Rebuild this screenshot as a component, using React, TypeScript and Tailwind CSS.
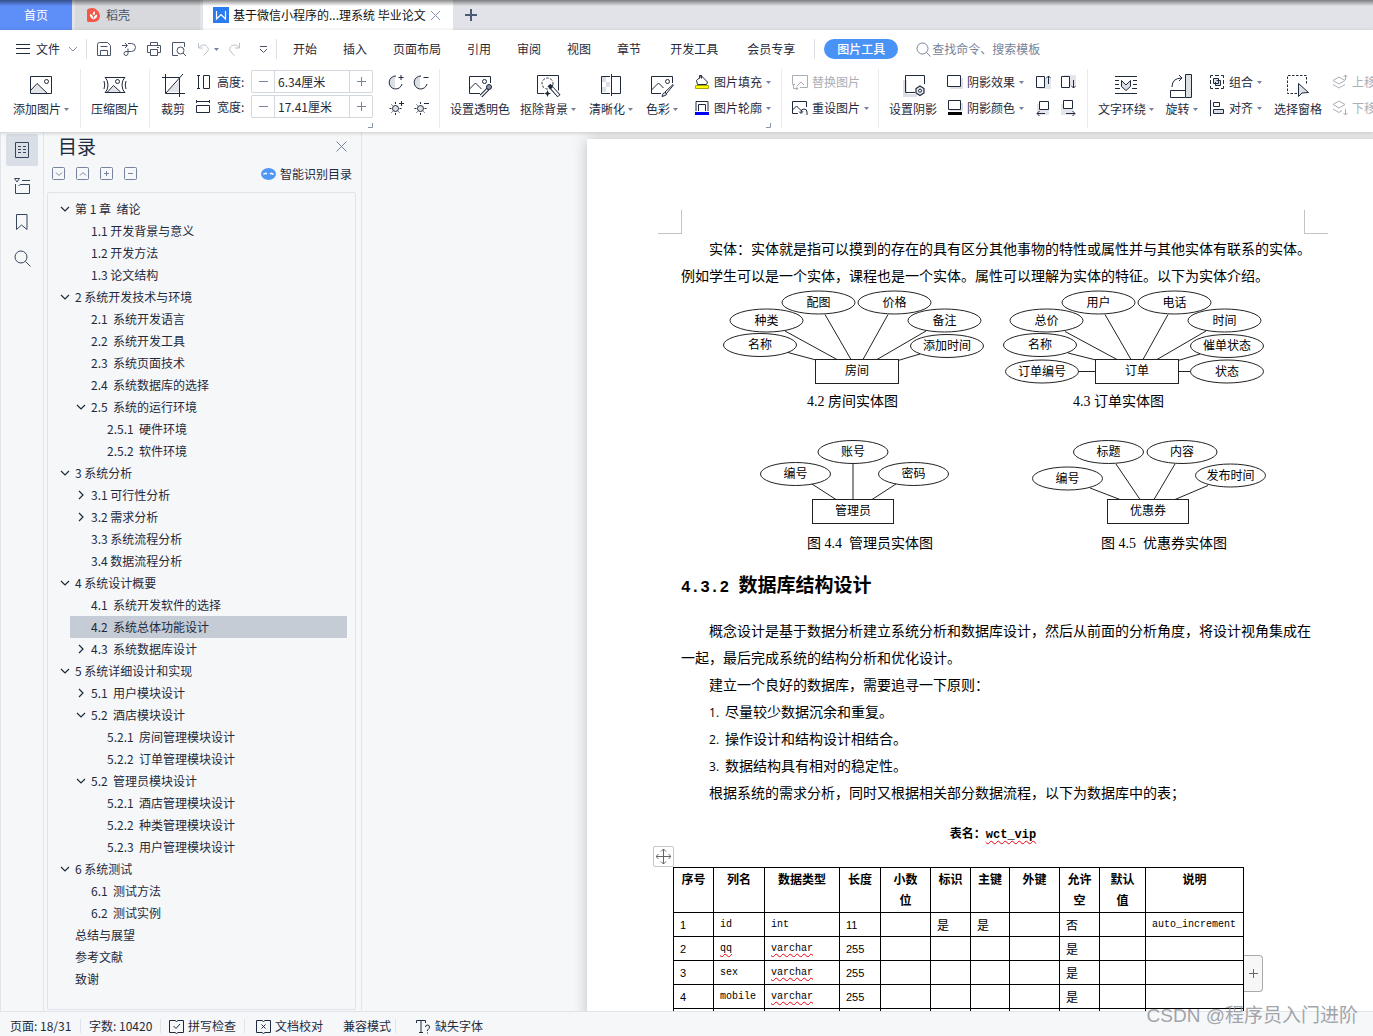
import type { ReactNode } from 'react'

const UI = "font-['Noto_Sans_CJK_SC',sans-serif]"

type SvgProps = { w?: number; h?: number; className?: string; children: ReactNode }

const Svg = ({ w = 16, h = 16, className = '', children }: SvgProps) => (
	<svg
		width={w}
		height={h}
		viewBox={`0 0 ${w} ${h}`}
		fill="none"
		stroke="currentColor"
		aria-hidden="true"
		className={`shrink-0 ${className}`}
	>
		{children}
	</svg>
)

const Caret = () => (
	<svg width="5" height="3" viewBox="0 0 5 3" className="shrink-0" aria-hidden="true">
		<path d="M0 0h5L2.5 3z" fill="#76839b" />
	</svg>
)

const Sep = () => <span className="w-px shrink-0 self-stretch bg-[#e9ebef]" />

/* ---------- title tabs ---------- */

const TitleTabs = () => (
	<div className="relative flex h-[30px] shrink-0 bg-[#e1e3e8] text-xs">
		<button className="w-[72px] bg-[#5e8ef8] text-white">首页</button>
		<button className="ml-[3px] flex w-[125px] items-center gap-1.5 bg-[#d8d9dd] pl-3 text-[#4a5262]">
			<Svg w={13} h={14}>
				<path
					d="M0 2.5Q0 1 2 .6Q7-1 10.500 2.500Q13 5 13 8Q12.500 14 6 14H1.500Q0 14 0 12.500z"
					fill="#f4564a"
					stroke="none"
				/>
				<path d="M6.500 11.500C3.500 10 2.500 8 3 6C5 6.500 6.500 8.500 6.500 11.500zM6.500 11.500C10 10 10.500 8 10 6.500C8 7 6.500 8.500 6.500 11.500zM5.500 6.500Q5.500 4 7.500 3Q8.500 5 7.500 7" fill="#fff" stroke="none" />
			</Svg>
			稻壳
		</button>
		<div className="ml-[3px] flex w-[250px] items-center bg-white pl-2.5 text-[#111]">
			<Svg>
				<path d="M0 0h16v16H0z" fill="#2a7bf0" stroke="none" />
				<path d="M3.500 4v8L8 7.500l4.500 4.500V4" stroke="#fff" strokeWidth="1.200" />
			</Svg>
			<span className="ml-1 whitespace-nowrap">基于微信小程序的...理系统 毕业论文</span>
			<button aria-label="关闭标签" className="ml-1 text-[#8794b0]">
				<Svg w={11} h={11}>
					<path d="M1 1l9 9M10 1l-9 9" />
				</Svg>
			</button>
		</div>
		<button aria-label="新建标签" className="ml-3 text-[#4c5a73]">
			<Svg w={12} h={12}>
				<path d="M6 0v12M0 6h12" strokeWidth="2" />
			</Svg>
		</button>
		<div className="pointer-events-none absolute inset-x-0 top-0 h-1.5 bg-linear-to-b from-black/45 to-transparent" />
	</div>
)

/* ---------- menu row ---------- */

const QuickAccess = () => (
	<div className="flex items-center gap-[9px] text-[#4b5568]">
		<button aria-label="保存">
			<Svg>
				<path d="M3.500 1.500h8l3 3v10h-13v-11q0-2 2-2zM4.500 5.500h7M4.500 14.500v-5h7v5" />
			</Svg>
		</button>
		<button aria-label="输出为PDF">
			<Svg>
				<path d="M1 4.500h5M4 2l2.500 2.500L4 7M7 2.500h3.500a4 4 0 010 8H5M5 10.500a2 2 0 102 2V7.500" />
			</Svg>
		</button>
		<button aria-label="打印">
			<Svg>
				<path d="M4.500 4.500v-3h7v3M4 11.500H1.500v-7h13v7H12M4.500 8.500h7v6h-7zM11 6.500h2" />
			</Svg>
		</button>
		<button aria-label="打印预览">
			<Svg>
				<path d="M7 14.500H1.500v-13h12V6M12 12l3 3" />
				<circle cx="9.500" cy="9.500" r="3.500" />
			</Svg>
		</button>
		<button aria-label="撤销" className="flex items-center gap-1 text-[#bcc2cc]">
			<Svg w={14}>
				<path d="M2.500 2v5H7M2.500 7Q6 2.500 10 4.500Q14 7.500 11 11L7.500 14.500" />
			</Svg>
			<Caret />
		</button>
		<button aria-label="恢复" className="text-[#bcc2cc]">
			<Svg w={14}>
				<path d="M11.500 2v5H7M11.500 7Q8 2.500 4 4.500Q0 7.500 3 11L6.500 14.500" />
			</Svg>
		</button>
		<button aria-label="自定义快速访问" className="ml-2">
			<Svg w={9} h={9}>
				<path d="M1 1.500h7M1 4l3.500 3.500L8 4" />
			</Svg>
		</button>
	</div>
)

const menuTabs = ['开始', '插入', '页面布局', '引用', '审阅', '视图', '章节', '开发工具', '会员专享']

const MenuRow = () => (
	<div className="flex h-[38px] shrink-0 items-center pl-4 whitespace-nowrap">
		<button className="flex items-center gap-1.5">
			<Svg w={14} h={12}>
				<path d="M0 1.500h14M0 5.500h14M0 10.500h14" />
			</Svg>
			文件
			<Svg w={10} h={6} className="ml-0.5 text-[#8a94a8]">
				<path d="M1 1l4 4l4-4" />
			</Svg>
		</button>
		<span className="mr-[9px] ml-2 h-5 w-px bg-[#dde0e6]" />
		<QuickAccess />
		<span className="ml-2 h-5 w-px bg-[#dde0e6]" />
		<nav className="ml-4 flex gap-[26px]">
			{menuTabs.map(tab => (
				<button key={tab} className="nth-[n+8]:ml-[3px]">
					{tab}
				</button>
			))}
		</nav>
		<span className="ml-[19px] h-5 w-px bg-[#dde0e6]" />
		<button className="ml-[9px] h-5 w-[74px] rounded-full bg-[#4893f5] font-medium text-white">
			图片工具
		</button>
		<label className="ml-[18px] flex items-center text-[#76839b]">
			<Svg w={15} h={15}>
				<circle cx="6.500" cy="6.500" r="5.500" />
				<path d="M10.500 10.500l4 4" />
			</Svg>
			<input
				type="text"
				aria-label="查找命令"
				placeholder="查找命令、搜索模板"
				className="ml-px w-40 outline-none placeholder:text-[#76839b]"
			/>
		</label>
	</div>
)

/* ---------- ribbon ---------- */

type BigProps = { label: string; caret?: boolean; className?: string; children: ReactNode }

const Big = ({ label, caret, className = '', children }: BigProps) => (
	<button className={`flex shrink-0 flex-col items-center gap-px pt-[3px] ${className}`}>
		<Svg w={26} h={27}>{children}</Svg>
		<span className="flex items-center gap-[3px] leading-[18px]">
			{label}
			{caret && <Caret />}
		</span>
	</button>
)

const Small = ({ label, caret, className = '', children }: BigProps) => (
	<button className={`flex h-[26px] items-center gap-1 ${className}`}>
		<Svg>{children}</Svg>
		<span>{label}</span>
		{caret && <Caret />}
	</button>
)

const Stepper = ({ id, label, value, children }: { id: string; label: string; value: string; children: ReactNode }) => (
	<div className="flex h-[25px] items-center">
		<Svg w={14}>{children}</Svg>
		<label htmlFor={id} className="ml-[7px] w-[34px]">
			{label}
		</label>
		<div className="flex h-[23px] w-[122px] rounded-xs border border-[#d3d7de]">
			<button aria-label={`${label} 减`} className="flex w-[22px] items-center justify-center text-[#76839b]">
				<Svg w={9} h={9}>
					<path d="M0 4.500h9" />
				</Svg>
			</button>
			<input
				id={id}
				defaultValue={value}
				className="w-0 flex-1 border-x border-[#d3d7de] pl-[3px] outline-none"
			/>
			<button aria-label={`${label} 加`} className="flex w-[22px] items-center justify-center text-[#76839b]">
				<Svg w={9} h={9}>
					<path d="M0 4.500h9M4.500 0v9" />
				</Svg>
			</button>
		</div>
	</div>
)

const Mini = ({ label, children }: { label: string; children: ReactNode }) => (
	<button aria-label={label}>
		<Svg>{children}</Svg>
	</button>
)

const Corner = () => (
	<Svg w={5} h={5} className="absolute right-0 bottom-0 text-[#8a94a8]">
		<path d="M4.500 0v4.500H0" />
	</Svg>
)

const sunRays = 'M7.500 2v2M7.500 13v2M1.500 8.500h2M11.500 8.500h2M3.500 4.500l1 1M3.500 12.500l1-1M11.500 12.500l-1-1'

const Ribbon = () => (
	<div className="flex h-16 shrink-0 gap-[10px] pt-px pb-1 pl-3 whitespace-nowrap">
		<Big label="添加图片" caret className="w-[58px]">
			<path d="M3 18l6-6.500l10 9.500H3z" fill="#e3e5ea" stroke="none" />
			<path d="M2.500 4.500h21v17h-21zM3 18l6-6.500l10 9.500" />
			<circle cx="18.500" cy="9.500" r="2" />
		</Big>
		<Sep />
		<Big label="压缩图片">
			<path d="M6 20l6-6l6 6z" fill="#e3e5ea" stroke="none" />
			<path d="M3 5.500h20M3 20.500h20M5.500 20l6-6.500l7 6.500M3 5q3 3.500 3 8t-3 8M2 9q1.500 4 0 8M23 5q-3 3.500-3 8t3 8M24 9q-1.500 4 0 8" />
			<circle cx="15.500" cy="9.500" r="2" />
		</Big>
		<Sep />
		<Big label="裁剪">
			<path d="M7 20L20 7v13z" fill="#e3e5ea" stroke="none" />
			<path d="M5.500 2v19.500H25M2 5.500h17.500V25M23 2L6 21" />
		</Big>
		<div className="relative w-[177px] shrink-0">
			<Stepper id="pic-height" label="高度:" value="6.34厘米">
				<path d="M2.500 1.500v13M1 1.500h3M1 14.500h3M7.500 1.500h6v13h-6z" />
			</Stepper>
			<Stepper id="pic-width" label="宽度:" value="17.41厘米">
				<path d="M.5 2.500h13M.5 1v3M13.500 1v3M.5 6.500h13v7H.5z" />
			</Stepper>
			<Corner />
		</div>
		<div className="grid w-[46px] shrink-0 grid-cols-[16px_16px] content-start gap-x-[9px] gap-y-[10px] pt-[5px] pl-[5px]">
			<Mini label="增加对比度">
				<path d="M7 2.500a6 6 0 000 12z" fill="#dcdfe5" stroke="none" />
				<path d="M8 2a6.500 6.500 0 106 8M13 1v5M10.500 3.500h5" />
			</Mini>
			<Mini label="降低对比度">
				<path d="M7 2.500a6 6 0 000 12z" fill="#dcdfe5" stroke="none" />
				<path d="M8 2a6.500 6.500 0 106 8M10.500 3.500h5" />
			</Mini>
			<Mini label="增加亮度">
				<circle cx="7.500" cy="8.500" r="3" fill="#dcdfe5" />
				<path d={sunRays} />
				<path d="M13.500 1v5M11 3.500h5" />
			</Mini>
			<Mini label="降低亮度">
				<circle cx="7.500" cy="8.500" r="3" fill="#dcdfe5" />
				<path d={sunRays} />
				<path d="M11 3.500h5" />
			</Mini>
		</div>
		<Sep />
		<Big label="设置透明色">
			<path d="M13 21.500H2.500v-17h21V11M2.500 17l6-6l6 6" />
			<circle cx="17.500" cy="9.500" r="2" />
			<path d="M14 24l7-7" strokeWidth="3.500" />
			<path d="M14 24l6.500-6.500" stroke="#fff" strokeWidth="1.500" />
			<circle cx="22" cy="15" r="2.500" fill="#8a94a8" />
		</Big>
		<Big label="抠除背景" caret>
			<path d="M9 21.500H2.500v-18h21v15" />
			<circle cx="12.500" cy="11.500" r="5.500" strokeDasharray="2.500 1.500" />
			<path d="M14 13l10 11" strokeWidth="4" />
			<path d="M17 16l6.500 7.500" stroke="#fff" strokeWidth="2" />
			<path d="M12.500 18l1 2.500l2.500 1l-2.500 1l-1 2.500l-1-2.500l-2.500-1l2.500-1z" fill="currentColor" stroke="none" />
		</Big>
		<Big label="清晰化" caret className="w-[50px]">
			<path d="M4 5h4v5H4zM8 10h4v5H8zM4 15h4v5H4z" fill="#dcdfe5" stroke="none" />
			<path d="M12 4.500H3.500v17H12M14 4.500h8.500v17H14M13.500 2v22" />
		</Big>
		<Big label="色彩" caret>
			<path d="M12 21.500H2.500v-17h21V11M2.500 18l7-7l5 5" />
			<circle cx="18.500" cy="9.500" r="2" />
			<path d="M16 20l8-7.500l.5.5l-7 8.500z" fill="#fff" />
			<path d="M13 24.500q1-5 4-3.500t-4 3.500z" fill="#dcdfe5" />
		</Big>
		<div className="relative flex w-[83px] shrink-0 flex-col pl-1.5">
			<Small label="图片填充" caret>
				<path d="M2.500 6.500l5-4.500l6 6l-1 2.500h-9zM5.500 4.500V1.500h2v3" />
				<path d="M1.500 11.500h13v3h-13z" fill="#ffff00" stroke="#a8a800" />
			</Small>
			<Small label="图片轮廓" caret>
				<path d="M2 11V1.500h12V11M4.500 11V4.500h7V11" />
				<path d="M1 12h14v3H1z" fill="#0000ff" stroke="none" />
			</Small>
			<Corner />
		</div>
		<Sep />
		<div className="flex w-[76px] shrink-0 flex-col">
			<Small label="替换图片" className="text-[#aaaeb7]">
				<path d="M3 10.500H.5v-9h15v12H8M5 12l4-4l3 3M1.500 10v4.500H6M4 12.500l2 2l-2 1.500" />
			</Small>
			<Small label="重设图片" caret>
				<path d="M6 13.500H.5v-12h14V7M.5 10l4-4l6 6M15 15v-3a3 3 0 00-6 0v1M7 11.500l2 2l2-2" />
			</Small>
		</div>
		<Sep />
		<Big label="设置阴影">
			<path d="M3 8h4v14h10v3H3z" fill="#dcdfe5" stroke="none" />
			<path d="M15 20.500H5.500v-17h19V12" />
			<path d="M20 14l4 2.500v4.500l-4 2.500l-4-2.500v-4.500z" fill="#e3e5ea" strokeWidth="1.200" />
			<circle cx="20" cy="18.700" r="1.500" fill="#fff" />
		</Big>
		<div className="flex w-[78px] shrink-0 flex-col">
			<Small label="阴影效果" caret>
				<path d="M3 4h13v11H3z" fill="#dcdfe5" stroke="none" />
				<path d="M.5 1.500h13v11H.5z" fill="#fff" />
			</Small>
			<Small label="阴影颜色" caret>
				<path d="M3 3h13v8H3z" fill="#dcdfe5" stroke="none" />
				<path d="M1.500.5h12v9h-12z" fill="#fff" />
				<path d="M1 12h14v3H1z" fill="#000" stroke="none" />
			</Small>
		</div>
		<div className="grid w-[42px] shrink-0 grid-cols-[16px_16px] content-start gap-x-[9px] gap-y-[10px] pt-[5px]">
			<Mini label="上移阴影">
				<path d="M4 5h12v10H4z" fill="#e3e5ea" stroke="none" />
				<path d="M1.500 2.500h8v11h-8z" fill="#fff" />
				<path d="M13.500 10V2M11 4.500L13.500 2L16 4.500" />
			</Mini>
			<Mini label="下移阴影">
				<path d="M4 1h12v10H4z" fill="#e3e5ea" stroke="none" />
				<path d="M1.500 2.500h8v11h-8z" fill="#fff" />
				<path d="M13.500 6v8M11 11.500l2.500 2.500l2.500-2.500" />
			</Mini>
			<Mini label="左移阴影">
				<path d="M2 4h12v11H2z" fill="#e3e5ea" stroke="none" />
				<path d="M4.500 1.500h9v8h-9z" fill="#fff" />
				<path d="M10 13.500H2M4.500 11L2 13.500L4.500 16" />
			</Mini>
			<Mini label="右移阴影">
				<path d="M1 4h12v11H1z" fill="#e3e5ea" stroke="none" />
				<path d="M3.500.5h9v8h-9z" fill="#fff" />
				<path d="M6 13.500h9M12.500 11l2.500 2.500l-2.500 2.500" />
			</Mini>
		</div>
		<Sep />
		<Big label="文字环绕" caret>
			<path d="M2 4.500h22M2 8.500h4M20 8.500h4M2 12.500h4M20 12.500h4M2 16.500h5M19 16.500h5M2 21.500h22" />
			<path d="M8.500 8.500l4.500 4.500l4.500-4.500v6l-4.500 4l-4.500-4z" fill="#dcdfe5" />
		</Big>
		<Big label="旋转" caret className="w-[35px]">
			<path d="M16.500 2.500h6v23h-6z" fill="#dcdfe5" />
			<path d="M16 25.500H1.500v-7H16M3 15q0-9 10-9M10 3l3 3l-3 3" />
		</Big>
		<div className="flex w-[55px] shrink-0 flex-col">
			<Small label="组合" caret>
				<path d="M1.500 4V1.500H4M12 1.500h2.500V4M14.500 12v2.500H12M4 14.500H1.500V12M6 1.500h4M6 14.500h4M1.500 6v4M14.500 6v4" />
				<path d="M4.500 4.500h5v5h-5zM7.500 6.500h4v5h-5V8" fill="#dcdfe5" />
			</Small>
			<Small label="对齐" caret>
				<path d="M1.500 0v16M4.500 2.500h6v4h-6z" />
				<path d="M4.500 9.500h10v4h-10z" fill="#dcdfe5" />
			</Small>
		</div>
		<Big label="选择窗格">
			<path d="M12 21.500H2.500v-18h19V13" strokeDasharray="2.500 1.500" />
			<path d="M13.500 11.500v13l3.500-3.500l6.500-.5z" fill="#dcdfe5" />
		</Big>
		<div className="flex shrink-0 flex-col text-[#aaaeb7]">
			<Small label="上移">
				<path d="M7 3l6 3.500l-6 3.500l-6-3.500zM1 10.500l6 3.500l6-3.500M13.500 6V1M11.500 3l2-2l2 2" />
			</Small>
			<Small label="下移">
				<path d="M7 1l6 3.500l-6 3.500l-6-3.500zM1 9l6 3.500l3-2M13.500 9v6M11.500 13l2 2l2-2" />
			</Small>
		</div>
	</div>
)

/* ---------- side bar ---------- */

const Rail = () => (
	<div className="flex w-11 shrink-0 flex-col items-center gap-1 border-x border-[#e2e5eb] pt-0.5 text-[#37455c]">
		<button aria-label="目录" className="flex size-8 items-center justify-center rounded-xs bg-[#dadee6]">
			<Svg>
				<path d="M1.500.5h13v15h-13zM4 4.500h3M9 4.500h3M4 7.500h3M9 7.500h3M4 10.500h3M9 10.500h3" />
			</Svg>
		</button>
		<button aria-label="章节" className="flex size-8 items-center justify-center">
			<Svg>
				<path d="M.5.500h5L3 4zM8 2.500h8M1.500 6v9.500h14v-9H6L4.500 8" />
			</Svg>
		</button>
		<button aria-label="书签" className="flex size-8 items-center justify-center">
			<Svg>
				<path d="M2.500.500h10.500v15l-5.500-4.500l-5 4.500z" />
			</Svg>
		</button>
		<button aria-label="查找" className="flex size-8 items-center justify-center">
			<Svg w={17} h={17}>
				<circle cx="7" cy="7" r="6" />
				<path d="M11.500 11.500l5 5" />
			</Svg>
		</button>
	</div>
)

type Node = { text: string; level: 1 | 2 | 3; arrow?: 'open' | 'closed'; active?: boolean }

const outline: Node[] = [
	{ text: '第 1 章  绪论', level: 1, arrow: 'open' },
	{ text: '1.1 开发背景与意义', level: 2 },
	{ text: '1.2 开发方法', level: 2 },
	{ text: '1.3 论文结构', level: 2 },
	{ text: '2 系统开发技术与环境', level: 1, arrow: 'open' },
	{ text: '2.1  系统开发语言', level: 2 },
	{ text: '2.2  系统开发工具', level: 2 },
	{ text: '2.3  系统页面技术', level: 2 },
	{ text: '2.4  系统数据库的选择', level: 2 },
	{ text: '2.5  系统的运行环境', level: 2, arrow: 'open' },
	{ text: '2.5.1  硬件环境', level: 3 },
	{ text: '2.5.2  软件环境', level: 3 },
	{ text: '3 系统分析', level: 1, arrow: 'open' },
	{ text: '3.1 可行性分析', level: 2, arrow: 'closed' },
	{ text: '3.2 需求分析', level: 2, arrow: 'closed' },
	{ text: '3.3 系统流程分析', level: 2 },
	{ text: '3.4 数据流程分析', level: 2 },
	{ text: '4 系统设计概要', level: 1, arrow: 'open' },
	{ text: '4.1  系统开发软件的选择', level: 2 },
	{ text: '4.2  系统总体功能设计', level: 2, active: true },
	{ text: '4.3  系统数据库设计', level: 2, arrow: 'closed' },
	{ text: '5 系统详细设计和实现', level: 1, arrow: 'open' },
	{ text: '5.1  用户模块设计', level: 2, arrow: 'closed' },
	{ text: '5.2  酒店模块设计', level: 2, arrow: 'open' },
	{ text: '5.2.1  房间管理模块设计', level: 3 },
	{ text: '5.2.2  订单管理模块设计', level: 3 },
	{ text: '5.2  管理员模块设计', level: 2, arrow: 'open' },
	{ text: '5.2.1  酒店管理模块设计', level: 3 },
	{ text: '5.2.2  种类管理模块设计', level: 3 },
	{ text: '5.2.3  用户管理模块设计', level: 3 },
	{ text: '6 系统测试', level: 1, arrow: 'open' },
	{ text: '6.1  测试方法', level: 2 },
	{ text: '6.2  测试实例', level: 2 },
	{ text: '总结与展望', level: 1 },
	{ text: '参考文献', level: 1 },
	{ text: '致谢', level: 1 },
]

const indent = { 1: 'pl-[9px]', 2: 'ml-[22px] pl-[3px]', 3: 'ml-[38px] pl-[3px]' }

const toolIcons = [
	{ label: '展开', d: 'M4 5.500L7 8.500L10 5.500' },
	{ label: '收起', d: 'M4 8.500L7 5.500L10 8.500' },
	{ label: '增加', d: 'M4 6.500h5M6.500 4v5' },
	{ label: '减少', d: 'M4 6.500h5' },
]

const OutlinePane = () => (
	<aside className="flex w-[318px] shrink-0 flex-col border-r border-[#e2e5eb] pr-[5px] pl-[3px]">
		<div className="flex h-7 items-center justify-between pr-[9px] pl-[11px]">
			<h2 className="text-[19px] leading-7 text-[#1f2a3c]">目录</h2>
			<button aria-label="关闭" className="text-[#76839b]">
				<Svg w={11} h={11}>
					<path d="M.5.500l10 10M10.500.500l-10 10" />
				</Svg>
			</button>
		</div>
		<div className="flex h-8 items-center pb-2 pl-[5px] text-[#76839b]">
			<div className="flex gap-[10px] pt-1">
				{toolIcons.map(({ label, d }) => (
					<button key={label} aria-label={label}>
						<Svg w={14} h={14}>
							<rect x=".5" y=".5" width="12" height="12" rx="1" />
							<path d={d} />
						</Svg>
					</button>
				))}
			</div>
			<button className="mr-1 ml-auto flex items-center gap-1 pt-1 text-[#1f2a3c]">
				<Svg w={15} h={14}>
					<ellipse cx="7.500" cy="7" rx="7.500" ry="6" fill="#4f97f5" stroke="none" />
					<path d="M2.500 7.500q1.500-2 3.500-.5M9 7q2-1.500 3.500.5" stroke="#fff" strokeWidth="1.500" />
				</Svg>
				智能识别目录
			</button>
		</div>
		<ul className="mb-px flex-1 overflow-hidden rounded-xs border border-[#dfe3ea] pt-[5px]">
			{outline.map((node, i) => (
				<li
					key={i}
					className={`mr-2 flex h-[22px] items-center ${indent[node.level]} ${node.active ? 'bg-[#c5ccd6]' : ''}`}
				>
					<span className="mr-0.5 flex w-4 justify-center">
						{node.arrow === 'open' && (
							<Svg w={10} h={6}>
								<path d="M1 1l4 4l4-4" strokeWidth="1.200" />
							</Svg>
						)}
						{node.arrow === 'closed' && (
							<Svg w={6} h={10}>
								<path d="M1 1l4 4l-4 4" strokeWidth="1.200" />
							</Svg>
						)}
					</span>
					<a href="#" className="whitespace-pre">
						{node.text}
					</a>
				</li>
			))}
		</ul>
	</aside>
)

/* ---------- document ---------- */

type Attr = [text: string, cx: number, cy: number]
type Diagram = {
	caption: ReactNode
	captionClass: string
	view: [number, number, number, number]
	rx: number
	box: [text: string, x: number, y: number, w: number]
	attrs: Attr[]
	lines: string
}

const roomDiagram: Diagram = {
	caption: '4.2 房间实体图',
	captionClass: 'pl-[84px]',
	view: [723, 290, 261, 98],
	rx: 36.5,
	box: ['房间', 815.5, 359.5, 83],
	attrs: [
		['名称', 760, 345],
		['种类', 766.5, 320.5],
		['配图', 818.5, 302.5],
		['价格', 894.5, 302.5],
		['备注', 944.5, 320.5],
		['添加时间', 947, 346],
	],
	lines: 'M788 352.5L816 360M785 331L837 359.5M825 314.5L851 359.5M888 314.5L863 359.5M926 331L877 359.5M920 354L898 360.5',
}

const orderDiagram: Diagram = {
	caption: '4.3 订单实体图',
	captionClass: 'pl-[70px]',
	view: [1003, 290, 261, 98],
	rx: 36.5,
	box: ['订单', 1095.5, 359.5, 83],
	attrs: [
		['名称', 1040, 345],
		['总价', 1046.5, 320.5],
		['用户', 1098.5, 302.5],
		['电话', 1174.5, 302.5],
		['时间', 1224.5, 320.5],
		['催单状态', 1227, 346],
		['订单编号', 1042, 371.5],
		['状态', 1227, 371.5],
	],
	lines: 'M1068 353L1096 360M1065 331.5L1117 359.5M1105 314.5L1131 359.5M1168 314.5L1143 359.5M1206 331L1157 359.5M1200 354L1178 360.5M1078.5 371.5H1095.5M1179 371.5H1190.5',
}

const adminDiagram: Diagram = {
	caption: '图 4.4  管理员实体图',
	captionClass: 'pl-[47px]',
	view: [760, 440, 189, 90],
	rx: 35,
	box: ['管理员', 812.5, 499.5, 81],
	attrs: [
		['账号', 853, 452],
		['编号', 795.5, 474],
		['密码', 913.5, 474],
	],
	lines: 'M812 484L836 499.5M853 464V499.5M896 484L872 499.5',
}

const couponDiagram: Diagram = {
	caption: '图 4.5  优惠券实体图',
	captionClass: 'pl-[69px]',
	view: [1032, 440, 235, 90],
	rx: 35,
	box: ['优惠券', 1107.5, 499.5, 81],
	attrs: [
		['标题', 1108.5, 452],
		['内容', 1182, 452],
		['编号', 1067.5, 478.5],
		['发布时间', 1230.5, 475.5],
	],
	lines: 'M1090 488L1120 499.5M1116 464L1140 499.5M1175 464L1154 499.5M1208 485.5L1175 499.5',
}

const EntityFigure = ({ caption, captionClass, view, rx, box, attrs, lines }: Diagram) => (
	<figure>
		<svg width={view[2]} height={view[3]} viewBox={view.join(' ')} fill="none" stroke="#222" className="block">
			<path d={lines} />
			{attrs.map(([text, cx, cy]) => (
				<g key={text}>
					<ellipse cx={cx} cy={cy} rx={rx} ry="11.5" />
					<text x={cx} y={cy + 4} fontSize="12" textAnchor="middle" fill="#000" stroke="none">
						{text}
					</text>
				</g>
			))}
			<rect x={box[1]} y={box[2]} width={box[3]} height="24" />
			<text x={box[1] + box[3] / 2} y={box[2] + 15} fontSize="12" textAnchor="middle" fill="#000" stroke="none">
				{box[0]}
			</text>
		</svg>
		<figcaption
			className={`font-['Liberation_Serif','Noto_Sans_CJK_SC',serif] text-sm leading-[27px] whitespace-pre ${captionClass}`}
		>
			{caption}
		</figcaption>
	</figure>
)

const Misspelt = ({ children }: { children: ReactNode }) => (
	<span className="underline decoration-red-600 decoration-wavy decoration-1 underline-offset-2 [text-decoration-skip-ink:none]">
		{children}
	</span>
)

const columns = [
	{ name: '序号', width: 'w-[40px]' },
	{ name: '列名', width: 'w-[51px]' },
	{ name: '数据类型', width: 'w-[75px]' },
	{ name: '长度', width: 'w-[41px]' },
	{ name: '小数位', width: 'w-[50px]' },
	{ name: '标识', width: 'w-[40px]' },
	{ name: '主键', width: 'w-[39px]' },
	{ name: '外键', width: 'w-[50px]' },
	{ name: '允许空', width: 'w-[40px]' },
	{ name: '默认值', width: 'w-[46px]' },
	{ name: '说明', width: 'w-[98px]' },
]

const rows = [
	['1', 'id', 'int', '11', '', '是', '是', '', '否', '', 'auto_increment'],
	['2', 'qq', 'varchar', '255', '', '', '', '', '是', '', ''],
	['3', 'sex', 'varchar', '255', '', '', '', '', '是', '', ''],
	['4', 'mobile', 'varchar', '255', '', '', '', '', '是', '', ''],
	['', '', '', '', '', '', '', '', '', '', ''],
]

const cellFont = (col: number) => {
	if (col === 0 || col === 3) return "font-['Liberation_Sans',sans-serif] text-[11px]"
	if (col === 1 || col === 2 || col === 10) return "font-['Liberation_Mono',monospace] text-[10px]"
	return 'text-xs'
}

const FieldTable = () => (
	<div className="relative -ml-2 w-[571px]">
		<button
			aria-label="移动表格"
			className="absolute -top-[21px] -left-5 flex size-[21px] items-center justify-center rounded-xs border border-[#c8c8c8] bg-white text-[#666]"
		>
			<Svg w={15} h={15}>
				<path d="M7.500 0v15M0 7.500h15M5 2.500L7.500 0L10 2.500M5 12.500L7.500 15L10 12.500M2.500 5L0 7.500L2.500 10M12.500 5L15 7.500L12.500 10" />
			</Svg>
		</button>
		<table className="w-full table-fixed border-collapse text-black">
			<thead>
				<tr className="h-[45px]">
					{columns.map(({ name, width }) => (
						<th
							key={name}
							className={`border border-black px-[7px] align-top text-xs leading-[21px] font-bold ${width}`}
						>
							{name}
						</th>
					))}
				</tr>
			</thead>
			<tbody>
				{rows.map((row, i) => (
					<tr key={i} className="h-6">
						{row.map((cell, j) => (
							<td key={j} className={`border border-black pl-[6px] leading-[18px] ${cellFont(j)}`}>
								{cell === 'qq' || cell === 'varchar' ? <Misspelt>{cell}</Misspelt> : cell}
							</td>
						))}
					</tr>
				))}
			</tbody>
		</table>
		<button
			aria-label="添加列"
			className="absolute top-[88px] left-full flex h-[37px] w-[19px] items-center justify-center rounded-r-sm border border-l-0 border-[#aaa] bg-[#f7f7f7] text-[#666]"
		>
			<Svg w={9} h={9}>
				<path d="M0 4.500h9M4.500 0v9" />
			</Svg>
		</button>
	</div>
)

const principles = ['尽量较少数据沉余和重复。', '操作设计和结构设计相结合。', '数据结构具有相对的稳定性。']

const Page = () => (
	<article className="w-[812px] shrink-0 bg-white pt-[71px] text-sm leading-[27px] whitespace-nowrap text-black shadow-[0_0_14px_rgba(0,0,0,0.22)]">
		<div className="flex justify-between px-[71px]">
			<span className="size-6 border-r border-b border-[#c4c4c4]" />
			<span className="size-6 border-b border-l border-[#c4c4c4]" />
		</div>
		<div className="px-[94px] pt-px">
			<p className="indent-7">
				实体：实体就是指可以摸到的存在的具有区分其他事物的特性或属性并与其他实体有联系的实体。
				<br />
				例如学生可以是一个实体，课程也是一个实体。属性可以理解为实体的特征。以下为实体介绍。
			</p>
			<div className="flex gap-[19px] pt-px pl-[42px]">
				<EntityFigure {...roomDiagram} />
				<EntityFigure {...orderDiagram} />
			</div>
			<div className="mt-[25px] flex gap-[83px] pl-[79px]">
				<EntityFigure {...adminDiagram} />
				<EntityFigure {...couponDiagram} />
			</div>
			<h3 className="text-[19px] leading-[53px] font-bold">
				<span className="font-['Liberation_Mono',monospace] text-base">4.3.2 </span>
				数据库结构设计
			</h3>
			<div className="mt-[7px]">
				<p className="indent-7">
					概念设计是基于数据分析建立系统分析和数据库设计，然后从前面的分析角度，将设计视角集成在
					<br />
					一起，最后完成系统的结构分析和优化设计。
				</p>
				<p className="indent-7">建立一个良好的数据库，需要追寻一下原则：</p>
				<ol className="pl-7">
					{principles.map((item, i) => (
						<li key={item}>
							<span className="mr-1.5 font-['Open_Sans',sans-serif] text-xs">{i + 1}.</span>
							{item}
						</li>
					))}
				</ol>
				<p className="indent-7">根据系统的需求分析，同时又根据相关部分数据流程，以下为数据库中的表；</p>
			</div>
			<p className="mt-[13px] mb-[18px] text-center text-xs leading-[27px] font-bold">
				表名：
				<span className="font-['Liberation_Mono',monospace]">
					<Misspelt>wct_vip</Misspelt>
				</span>
			</p>
			<div className="whitespace-normal">
				<FieldTable />
			</div>
		</div>
	</article>
)

/* ---------- status bar ---------- */

const StatusBar = () => (
	<footer className="flex h-[25px] shrink-0 items-center border-t border-[#dfe3ea] bg-[#f5f7f9] pt-1 pl-2.5 whitespace-nowrap">
		<span className="w-[63px]">页面: 18/31</span>
		<span className="mx-[7px] h-3.5 w-px bg-[#dfe3ea]" />
		<span className="w-[68px] pl-px">字数: 10420</span>
		<span className="mr-2 ml-1 h-3.5 w-px bg-[#dfe3ea]" />
		<button className="flex items-center gap-1">
			<Svg w={15} h={15}>
				<path d="M6 1.500H.5v12H6l1.500 1l1.500-1h5.500v-12H9l-1.500 1zM4.500 7l2.500 2.500l4-4.500" />
			</Svg>
			拼写检查
		</button>
		<span className="mr-[11px] ml-2 h-3.5 w-px bg-[#dfe3ea]" />
		<button className="flex items-center gap-1">
			<Svg w={15} h={15}>
				<path d="M6 1.500H.5v12H6l1.500 1l1.500-1h5.500v-12H9l-1.500 1zM5.500 5.500l4 4M9.500 5.500l-4 4" />
			</Svg>
			文档校对
		</button>
		<button className="ml-5">兼容模式</button>
		<span className="mr-5 ml-1 h-3.5 w-px bg-[#dfe3ea]" />
		<button className="flex items-center gap-1">
			<Svg w={15} h={15}>
				<path d="M.5 4V1.500h9V4M5 1.500v12M3 13.500h4M9.500 8q0-2 2-2t2 2q0 1.500-2 3v1M11.500 13.500v1" />
			</Svg>
			缺失字体
		</button>
	</footer>
)

const App = () => {
	return (
		<div className={`relative flex h-screen flex-col overflow-hidden bg-[#f5f7f9] text-xs text-[#1f2a3c] ${UI}`}>
			<TitleTabs />
			<header className="relative z-10 shrink-0 bg-white shadow-[0_1px_4px_rgba(0,0,0,0.18)]">
				<MenuRow />
				<Ribbon />
			</header>
			<div className="flex min-h-0 flex-1">
				<Rail />
				<OutlinePane />
				<main className="flex min-w-0 flex-1 items-start overflow-hidden pt-[7px] pl-[225px]">
					<Page />
				</main>
			</div>
			<StatusBar />
			<div className="pointer-events-none absolute right-[15px] bottom-1.5 font-['Liberation_Sans','Noto_Sans_CJK_SC',sans-serif] text-[19px] leading-7 text-[#8b8d92]/80">
				CSDN @程序员入门进阶
			</div>
		</div>
	)
}

export default App
